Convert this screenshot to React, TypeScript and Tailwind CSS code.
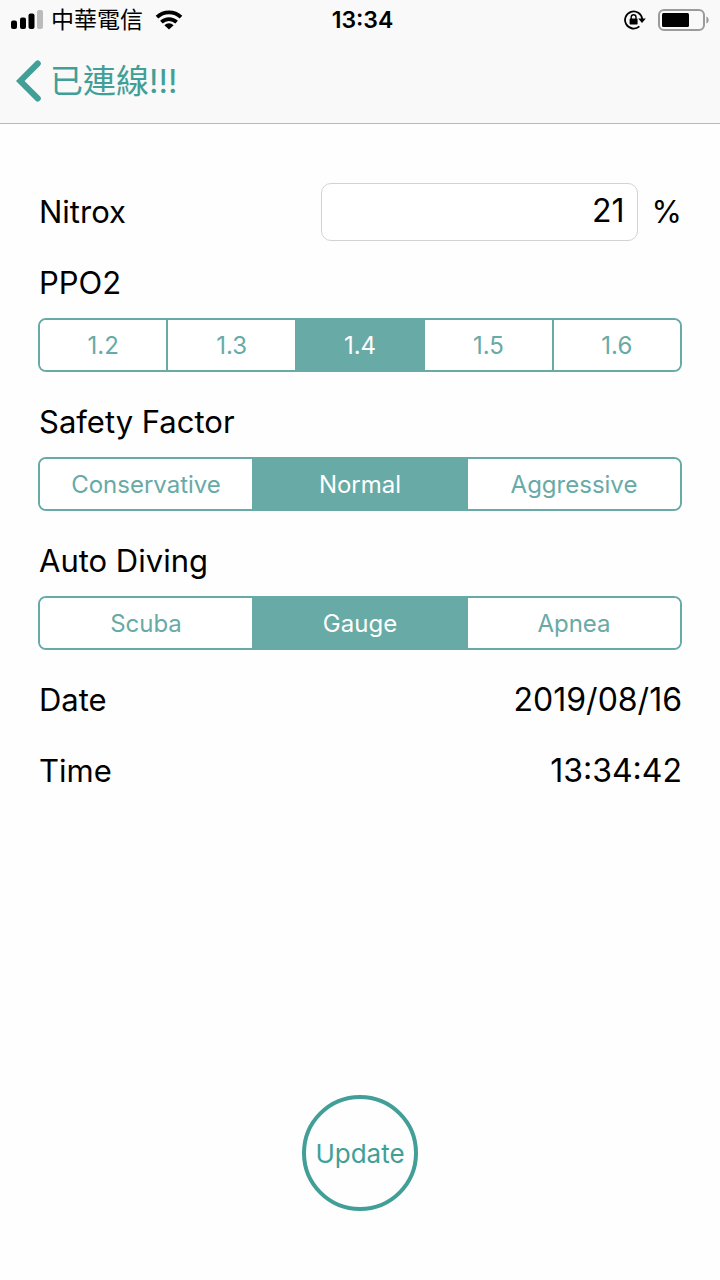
import React, { useState } from 'react'

interface SegmentedProps {
  label: string
  options: string[]
  value: string
  onChange: (value: string) => void
}

const PPO2_OPTIONS = ['1.2', '1.3', '1.4', '1.5', '1.6']
const SAFETY_OPTIONS = ['Conservative', 'Normal', 'Aggressive']
const DIVING_OPTIONS = ['Scuba', 'Gauge', 'Apnea']

function Segmented({ label, options, value, onChange }: SegmentedProps) {
  return (
    <div role="group" aria-label={label} className="mb-[30px]">
      <div className="pl-px text-[31px] leading-10">{label}</div>
      <div className="mt-[15px] flex h-[54px] overflow-hidden rounded-lg border-2 border-[#68aaa6] divide-x-2 divide-[#68aaa6]">
        {options.map(o => (
          <button
            key={o}
            type="button"
            aria-pressed={o === value}
            onClick={() => onChange(o)}
            className={`flex-1 basis-0 pt-0.5 text-2xl ${
              o === value ? 'bg-[#68aaa6] text-white' : 'bg-white text-[#68aaa6]'
            }`}
          >
            {o}
          </button>
        ))}
      </div>
    </div>
  )
}

function SignalIcon() {
  return (
    <svg width="32" height="20" viewBox="0 0 32 20" aria-hidden="true">
      <rect x="0" y="10.5" width="6" height="8.5" rx="2" />
      <rect x="9" y="7.5" width="6" height="11.5" rx="2" />
      <rect x="17.5" y="3.5" width="6" height="15.5" rx="2" />
      <rect x="26" y="0" width="6" height="19" rx="2" fill="#bbb" />
    </svg>
  )
}

function WifiIcon() {
  return (
    <svg width="28" height="20" viewBox="0 0 28 20" aria-hidden="true">
      <g fill="none" stroke="#000" strokeWidth="3.8">
        <path d="M2 7.2a17.2 17.2 0 0 1 24 0" />
        <path d="M6.4 12.2a11 11 0 0 1 15.2 0" />
      </g>
      <path d="M14 19.6l-4.6-4.4a6.6 6.6 0 0 1 9.2 0z" />
    </svg>
  )
}

function RotationLockIcon() {
  return (
    <svg width="22" height="20" viewBox="0 0 22 20" aria-hidden="true">
      <path d="M15.4 16.4A8.6 8.6 0 1 1 18.2 9" fill="none" stroke="#000" strokeWidth="1.8" />
      <path d="M14.2 8.4h7.6l-3.8 4.6z" />
      <rect x="5.6" y="8.6" width="8" height="6" rx="0.8" />
      <path d="M7.2 9V7.2a2.4 2.4 0 0 1 4.8 0V9" fill="none" stroke="#000" strokeWidth="1.4" />
    </svg>
  )
}

function BatteryIcon() {
  return (
    <svg width="52" height="22" viewBox="0 0 52 22" aria-hidden="true">
      <rect x="1" y="1" width="45" height="20" rx="5" fill="none" stroke="#9b9b9b" strokeWidth="2" />
      <rect x="4" y="4" width="27" height="14" rx="1.5" />
      <path d="M48.4 7.4c3 1.2 3 6 0 7.2z" fill="#9b9b9b" />
    </svg>
  )
}

export default function App() {
  const [nitrox, setNitrox] = useState('21')
  const [ppo2, setPpo2] = useState('1.4')
  const [safety, setSafety] = useState('Normal')
  const [diving, setDiving] = useState('Gauge')

  return (
    <div className="flex min-h-screen flex-col bg-[#fefefe] text-black font-[Inter,'Noto_Sans_CJK_TC',sans-serif]">
      <header className="border-b border-[#b9b9b9] bg-[#f9f9f9]">
        {/* status bar */}
        <div className="grid h-10 grid-cols-3 items-center pl-[11px] pr-[10px]">
          <div className="flex items-center gap-2">
            <SignalIcon />
            <span className="text-[23px] leading-8">中華電信</span>
            <span className="ml-1"><WifiIcon /></span>
          </div>
          <div className="pl-1 text-center text-[23px] font-semibold leading-8">13:34</div>
          <div className="flex items-center justify-end gap-3">
            <RotationLockIcon />
            <BatteryIcon />
          </div>
        </div>

        {/* nav bar */}
        <nav className="flex h-[83px] items-start pl-4">
          <button type="button" className="flex items-center gap-2 text-[33px] leading-[82px] text-[#429f98]">
            <svg width="26" height="42" viewBox="0 0 26 42" aria-hidden="true">
              <path d="M21.8 3.5L4.2 21l17.6 17.5" fill="none" stroke="currentColor" strokeWidth="6" strokeLinecap="round" />
            </svg>
            <span>已連線!!!</span>
          </button>
        </nav>
      </header>

      <main className="flex flex-1 flex-col px-[38px] pb-[69px] pt-[59px]">
        <div className="mb-[22px] flex items-center text-[32px]">
          <label htmlFor="nitrox" className="flex-1 pl-px text-[31px]">Nitrox</label>
          <input
            id="nitrox"
            inputMode="numeric"
            value={nitrox}
            onChange={e => setNitrox(e.target.value)}
            className="h-[58px] w-[317px] rounded-[10px] border border-[#d2d2d2] bg-white px-3 pb-1 text-right outline-none"
          />
          <span className="ml-[14px] text-[31px]">%</span>
        </div>

        <Segmented label="PPO2" options={PPO2_OPTIONS} value={ppo2} onChange={setPpo2} />
        <Segmented label="Safety Factor" options={SAFETY_OPTIONS} value={safety} onChange={setSafety} />
        <Segmented label="Auto Diving" options={DIVING_OPTIONS} value={diving} onChange={setDiving} />

        <div className="flex justify-between text-[32px] leading-10">
          <span className="pl-px text-[31px]">Date</span>
          <span>2019/08/16</span>
        </div>
        <div className="mt-[31px] flex justify-between text-[32px] leading-10">
          <span className="pl-px text-[31px]">Time</span>
          <span>13:34:42</span>
        </div>

        <button
          type="button"
          className="mx-auto mt-auto size-[116px] rounded-full border-4 border-[#429f98] text-[26px] text-[#429f98]"
        >
          Update
        </button>
      </main>
    </div>
  )
}
